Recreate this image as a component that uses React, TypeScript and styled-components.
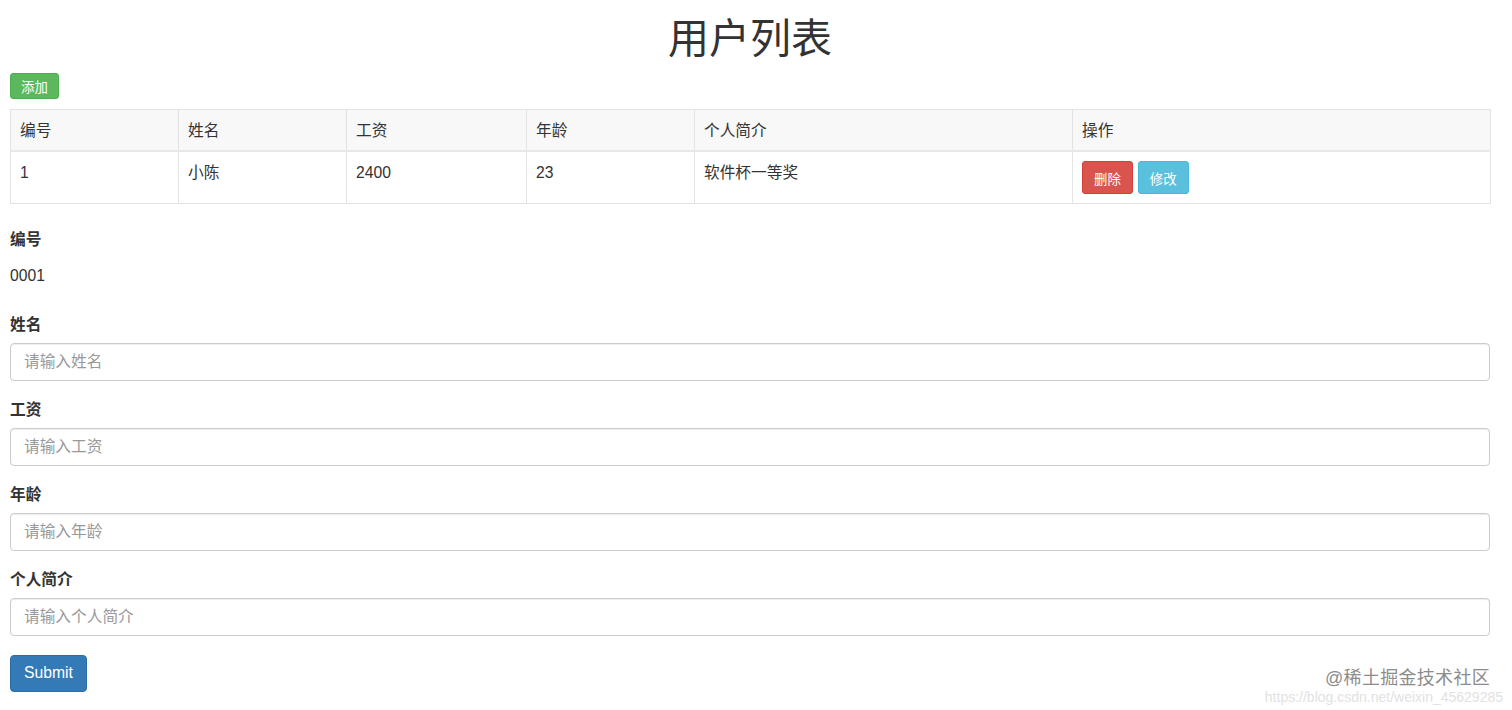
import React from "react";
import styled, { createGlobalStyle } from "styled-components";

const GlobalStyle = createGlobalStyle`
  html, body {
    margin: 0;
    padding: 0;
    background: #fff;
  }
  body {
    font-family: "Liberation Sans", "Noto Sans CJK SC", sans-serif;
    font-size: 15.7px;
    line-height: 1.42857;
    color: #333;
  }
  * {
    box-sizing: border-box;
  }
`;

const Page = styled.div`
  position: relative;
  height: 710px;
  overflow: hidden;
  padding: 0 22px 0 10px;
`;

const Title = styled.h1`
  margin: 17px 0 11px;
  font-size: 41px;
  font-weight: 400;
  line-height: 1.1;
  text-align: center;
  color: #333;
`;

const palette = {
  success: { bg: "#5cb85c", border: "#4cae4c" },
  danger: { bg: "#d9534f", border: "#d43f3a" },
  info: { bg: "#5bc0de", border: "#46b8da" },
  primary: { bg: "#337ab7", border: "#2e6da4" },
};

type Variant = keyof typeof palette;
type Size = "xs" | "sm" | "md";

const sizes: Record<Size, { h: number; px: number; fs: number }> = {
  xs: { h: 26, px: 10, fs: 13.4 },
  sm: { h: 33, px: 11, fs: 13.4 },
  md: { h: 37, px: 13, fs: 15.7 },
};

const Button = styled.button<{ $variant: Variant; $size: Size }>`
  display: inline-flex;
  align-items: center;
  justify-content: center;
  height: ${(p) => sizes[p.$size].h}px;
  padding: 0 ${(p) => sizes[p.$size].px}px;
  font-family: inherit;
  font-size: ${(p) => sizes[p.$size].fs}px;
  color: #fff;
  background: ${(p) => palette[p.$variant].bg};
  border: 1px solid ${(p) => palette[p.$variant].border};
  border-radius: ${(p) => (p.$size === "md" ? 4 : 3)}px;
  cursor: pointer;
`;

const Toolbar = styled.div`
  display: flex;
  margin-bottom: 10px;
`;

const Table = styled.table`
  width: 1480px;
  border-collapse: collapse;
  table-layout: fixed;
  margin-bottom: 25px;
`;

const HeadCell = styled.th<{ $w: number }>`
  width: ${(p) => p.$w}px;
  padding: 10px 9px 8px;
  text-align: left;
  font-weight: 400;
  background: #f8f8f8;
  border: 1px solid #e3e3e3;
  border-bottom-width: 2px;
  border-bottom-color: #e8e8e8;
  line-height: 22px;
`;

const Cell = styled.td`
  padding: 10px 9px 7px;
  vertical-align: top;
  border: 1px solid #e3e3e3;
  line-height: 22px;
  height: 52px;
`;

const Actions = styled.div`
  display: flex;
  gap: 5px;
  margin-top: -1px;
`;

const Form = styled.form`
  display: flex;
  flex-direction: column;
`;

const Group = styled.div`
  display: flex;
  flex-direction: column;
  margin-bottom: 18px;
`;

const Label = styled.label`
  font-weight: 700;
  line-height: 22px;
  margin-bottom: 7px;
`;

const Static = styled.p`
  margin: 7px 0 9px;
  line-height: 22px;
`;

const Input = styled.input`
  width: 1480px;
  height: 38px;
  padding: 0 13px;
  font-family: inherit;
  font-size: 15.7px;
  color: #555;
  border: 1px solid #ccc;
  border-radius: 4px;
  box-shadow: inset 0 1px 1px rgba(0, 0, 0, 0.075);
  outline: none;
  &::placeholder {
    color: #999;
  }
`;

const SubmitRow = styled.div`
  display: flex;
  padding-top: 1px;
`;

const Watermark = styled.div`
  position: absolute;
  right: 9px;
  top: 667px;
  display: flex;
  flex-direction: column;
  align-items: flex-end;
  pointer-events: none;
`;

const MarkMain = styled.span`
  margin-right: 13px;
  font-size: 18px;
  line-height: 22px;
  color: #8c8c8c;
  letter-spacing: 0.3px;
`;

const MarkUrl = styled.span`
  font-size: 14px;
  line-height: 16px;
  color: #e2e2e2;
`;

const columns = [
  { key: "id", label: "编号", w: 168 },
  { key: "name", label: "姓名", w: 168 },
  { key: "salary", label: "工资", w: 180 },
  { key: "age", label: "年龄", w: 168 },
  { key: "intro", label: "个人简介", w: 378 },
  { key: "op", label: "操作", w: 418 },
];

const rows = [{ id: "1", name: "小陈", salary: "2400", age: "23", intro: "软件杯一等奖" }];

const fields = [
  { label: "姓名", placeholder: "请输入姓名" },
  { label: "工资", placeholder: "请输入工资" },
  { label: "年龄", placeholder: "请输入年龄" },
  { label: "个人简介", placeholder: "请输入个人简介" },
];

const App: React.FC = () => {
  return (
    <>
      <GlobalStyle />
      <Page>
        <Title>用户列表</Title>
        <Toolbar>
          <Button $variant="success" $size="xs">添加</Button>
        </Toolbar>
        <Table>
          <thead>
            <tr>
              {columns.map((c) => (
                <HeadCell key={c.key} $w={c.w}>{c.label}</HeadCell>
              ))}
            </tr>
          </thead>
          <tbody>
            {rows.map((r) => (
              <tr key={r.id}>
                <Cell>{r.id}</Cell>
                <Cell>{r.name}</Cell>
                <Cell>{r.salary}</Cell>
                <Cell>{r.age}</Cell>
                <Cell>{r.intro}</Cell>
                <Cell>
                  <Actions>
                    <Button $variant="danger" $size="sm">删除</Button>
                    <Button $variant="info" $size="sm">修改</Button>
                  </Actions>
                </Cell>
              </tr>
            ))}
          </tbody>
        </Table>
        <Form onSubmit={(e) => e.preventDefault()}>
          <Group>
            <Label>编号</Label>
            <Static>0001</Static>
          </Group>
          {fields.map((f) => (
            <Group key={f.label}>
              <Label>{f.label}</Label>
              <Input placeholder={f.placeholder} />
            </Group>
          ))}
          <SubmitRow>
            <Button type="submit" $variant="primary" $size="md">Submit</Button>
          </SubmitRow>
        </Form>
        <Watermark>
          <MarkMain>@稀土掘金技术社区</MarkMain>
          <MarkUrl>https://blog.csdn.net/weixin_45629285</MarkUrl>
        </Watermark>
      </Page>
    </>
  );
};

export default App;
